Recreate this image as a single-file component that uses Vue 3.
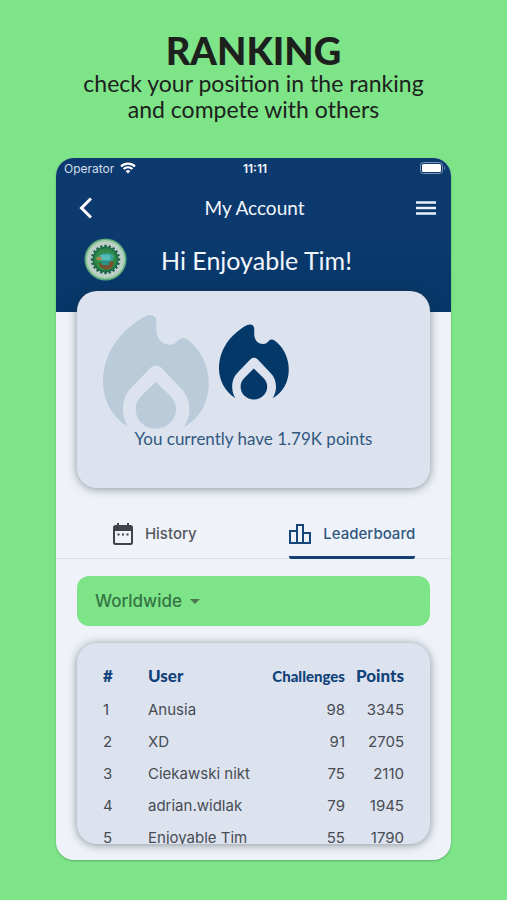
<script setup>
import { ref } from 'vue'

const scope = ref('Worldwide')
const rows = [
  { name: 'Anusia', challenges: 98, points: 3345 },
  { name: 'XD', challenges: 91, points: 2705 },
  { name: 'Ciekawski nikt', challenges: 75, points: 2110 },
  { name: 'adrian.widlak', challenges: 79, points: 1945 },
  { name: 'Enjoyable Tim', challenges: 55, points: 1790 },
]

const flame =
  'M175 425C125 393 100 342 100 290C100 205 150 135 228 92C245 85 260 92 260 108V135C262 165 280 178 300 178C312 178 320 172 327 163C334 156 344 156 354 163C395 195 417 240 417 295C417 350 390 400 343 425C353 410 359 392 359 375C359 345 350 325 330 305L275 247C265 238 253 238 243 247L187 305C168 325 160 345 160 372C160 392 165 410 175 425Z' +
  'M258 290L300 330C312 342 319 355 319 371C319 405 291 430 258 430C225 430 198 405 198 371C198 355 205 342 217 330Z'

const teeth = Array.from({ length: 20 }, (_, i) => i * 18)
</script>

<template>
  <main class="page">
    <header class="intro">
      <h1>RANKING</h1>
      <p>check your position in the ranking<br />and compete with others</p>
    </header>

    <section class="phone">
      <div class="top">
        <div class="status">
          <span class="operator">
            Operator
            <svg width="16" height="12" viewBox="0 0 16 12" fill="none" stroke="#fff" stroke-width="2.2">
              <path d="M1 4.4a10 10 0 0 1 14 0" />
              <path d="M3.6 7.1a6.2 6.2 0 0 1 8.8 0" />
              <path d="M8 11.6L5.7 9.2a3.3 3.3 0 0 1 4.6 0z" fill="#fff" stroke="none" />
            </svg>
          </span>
          <time>11:11</time>
          <svg class="battery" width="26" height="12" viewBox="0 0 26 12">
            <rect x="0.5" y="0.5" width="22" height="11" rx="3" fill="none" stroke="#7f98b8" />
            <rect x="2" y="2" width="19" height="8" rx="1.5" fill="#fff" />
            <path d="M24 4v4c1-.4 1.500-1 1.500-2S25 4.400 24 4z" fill="#4d6d95" />
          </svg>
        </div>

        <nav class="bar">
          <button type="button" aria-label="Back">
            <svg width="14" height="22" viewBox="0 0 14 22" fill="none" stroke="#fff" stroke-width="3">
              <path d="M12 1.500L2.500 11L12 20.500" />
            </svg>
          </button>
          <h2>My Account</h2>
          <button type="button" aria-label="Menu">
            <svg width="20" height="14" viewBox="0 0 20 14" stroke="#e8f0f8" stroke-width="2.4">
              <path d="M0 1.500H20M0 7H20M0 12.500H20" />
            </svg>
          </button>
        </nav>

        <div class="greeting">
          <svg width="43" height="43" viewBox="0 0 43 43">
            <circle cx="21.500" cy="21.500" r="21" fill="#5aa878" />
            <circle cx="21.500" cy="21.500" r="19.500" fill="#a5cdb0" />
            <circle cx="21.500" cy="21.500" r="17.500" fill="#c6d4cf" />
            <circle cx="21.500" cy="21.500" r="15.800" fill="none" stroke="#94aaa5" stroke-dasharray="1 2" />
            <g fill="#1d5f4c">
              <rect
                v-for="angle in teeth"
                :key="angle"
                x="20.300"
                y="6.800"
                width="2.400"
                height="4"
                :transform="`rotate(${angle} 21.5 21.5)`"
              />
            </g>
            <circle cx="21.500" cy="21.500" r="13" fill="#20704a" />
            <circle cx="21.500" cy="21.500" r="11" fill="#2f8b45" />
            <path d="M13 20c2-5 13-7 17-2l-2 5H14z" fill="#3ba39a" />
            <path d="M17 17h9v5h-9z" fill="#55bdb8" />
            <path d="M12.500 19h5v3h-5z" fill="#a68a44" />
            <path d="M15 25l7 2 5-4 3 1-2 6-6 2-6-3z" fill="#75552f" />
            <path d="M18 23h7v4h-7z" fill="#2c9289" />
          </svg>
          <p>Hi Enjoyable Tim!</p>
        </div>
      </div>

      <section class="card points">
        <svg class="shade" viewBox="100 89 318 342"><path :d="flame" fill="#bacbd9" /></svg>
        <svg class="flame" viewBox="100 89 318 342"><path :d="flame" fill="#043869" /></svg>
        <p>You currently have 1.79K points</p>
      </section>

      <nav class="tabs">
        <button type="button" class="tab">
          <svg width="20" height="22" viewBox="0 0 20 22">
            <path d="M4 0h2v2h8V0h2v2h1.500A2.500 2.500 0 0 1 20 4.500v15a2.500 2.500 0 0 1-2.500 2.500h-15A2.500 2.500 0 0 1 0 19.500v-15A2.500 2.500 0 0 1 2.500 2H4zM2 8v11.500l.5.5h15l.5-.5V8z" fill="#404348" />
            <path d="M4.500 10.500h2v2h-2zM9 10.500h2v2H9zM13.500 10.500h2v2h-2z" fill="#404348" />
          </svg>
          History
        </button>
        <button type="button" class="tab active">
          <svg width="22" height="20" viewBox="0 0 22 20" fill="none" stroke="#16457a" stroke-width="2">
            <path d="M8 19V1h6v18M8 7H1v12h20V9h-7" />
          </svg>
          Leaderboard
        </button>
      </nav>

      <div class="filter">
        <select v-model="scope" aria-label="Region">
          <option>Worldwide</option>
        </select>
        <svg width="10" height="5" viewBox="0 0 10 5"><path d="M0 0h10L5 5z" fill="#4c7451" /></svg>
      </div>

      <section class="card board">
        <table>
          <thead>
            <tr>
              <th class="rank">#</th>
              <th>User</th>
              <th class="num small">Challenges</th>
              <th class="num last">Points</th>
            </tr>
          </thead>
          <tbody>
            <tr v-for="(row, i) in rows" :key="row.name">
              <td>{{ i + 1 }}</td>
              <td>{{ row.name }}</td>
              <td class="num">{{ row.challenges }}</td>
              <td class="num">{{ row.points }}</td>
            </tr>
          </tbody>
        </table>
      </section>
    </section>
  </main>
</template>

<style>
body {
  margin: 0;
  background: #7de488;
}
</style>

<style scoped>
.page {
  box-sizing: border-box;
  min-height: 100vh;
  padding: 30px 56px 39px;
  background: #7de488;
  color: #1d211d;
  font-family: Inter, 'Liberation Sans', sans-serif;
}
h1,
h2,
p {
  margin: 0;
}
button {
  padding: 0;
  border: 0;
  background: none;
  font: inherit;
  color: inherit;
}
svg {
  display: block;
  flex: none;
}
.intro {
  text-align: center;
  font-family: Lato, sans-serif;
  margin-bottom: 36px;
}
.intro h1 {
  font-size: 38px;
  line-height: 40px;
  font-weight: 900;
}
.intro p {
  font-size: 23px;
  line-height: 26px;
  white-space: nowrap;
  display: flex;
  justify-content: center;
}
.phone {
  overflow: hidden;
  border-radius: 18px;
  background: #eff3f9;
  padding-bottom: 16px;
  box-shadow: 0 1px 2px #3c784680;
}
.top {
  height: 154px;
  background: linear-gradient(#0d3a6e, #0c3a6e 50%, #043768);
  color: #f2f6fb;
}
.status {
  display: grid;
  grid-template-columns: 1fr auto 1fr;
  align-items: center;
  height: 20px;
  padding: 0 5px 0 8px;
  font-size: 12px;
}
.operator {
  display: flex;
  align-items: center;
  gap: 6px;
  color: #d5deea;
}
time {
  font-weight: 600;
}
.battery {
  justify-self: end;
}
.bar {
  display: flex;
  align-items: center;
  justify-content: space-between;
  height: 60px;
  padding: 0 15px 0 23px;
}
h2 {
  font-family: Lato, sans-serif;
  font-size: 19px;
  line-height: 24px;
  font-weight: 400;
}
.greeting {
  display: flex;
  align-items: center;
  gap: 34px;
  height: 43px;
  padding-left: 28px;
}
.greeting p {
  font-family: Lato, sans-serif;
  font-size: 25px;
  line-height: 28px;
}
.card {
  margin: 0 21px;
  border-radius: 20px;
  background: #dce3ef;
  box-shadow: 0 1px 10px #28323c80;
}
.points {
  position: relative;
  display: flex;
  flex-direction: column;
  align-items: center;
  gap: 28px;
  margin-top: -21px;
  padding: 33px 0 38px;
}
.points p {
  position: relative;
  font-family: Lato, sans-serif;
  font-size: 17px;
  line-height: 22px;
  color: #31597f;
}
.flame {
  width: 70px;
  height: 76px;
}
.shade {
  position: absolute;
  left: 26px;
  top: 24px;
  width: 106px;
  height: 114px;
}
.tabs {
  display: grid;
  grid-template-columns: 1fr 1fr;
  justify-items: center;
  height: 50px;
  margin-top: 20px;
  border-bottom: 1px solid #dce1e8;
}
.tab {
  box-sizing: border-box;
  display: flex;
  align-items: center;
  gap: 12px;
  height: 51px;
  padding-top: 3px;
  border-bottom: 3px solid transparent;
  font-size: 15px;
  font-weight: 500;
  color: #55585e;
}
.tab.active {
  border-color: #143f70;
  border-radius: 2px;
  color: #31587f;
}
.filter {
  display: flex;
  align-items: center;
  gap: 8px;
  height: 50px;
  margin: 17px 21px;
  padding-left: 18px;
  border-radius: 12px;
  background: #7de488;
}
select {
  appearance: none;
  padding: 0;
  border: 0;
  background: none;
  color: #347544;
  font: 500 17px/24px Inter, sans-serif;
}
.board {
  height: 201px;
  overflow: hidden;
}
table {
  width: calc(100% - 52px);
  margin: 15px 26px 0;
  border-collapse: collapse;
  table-layout: fixed;
  font-size: 15px;
  line-height: 32px;
  color: #484c53;
}
th,
td {
  padding: 0;
  text-align: left;
  white-space: nowrap;
}
th {
  font-family: Lato, sans-serif;
  font-size: 17px;
  line-height: 36px;
  font-weight: 900;
  color: #12427a;
}
.rank {
  width: 45px;
}
.small {
  width: 80px;
  font-size: 15px;
}
.last {
  width: 59px;
}
.num {
  text-align: right;
}
</style>
